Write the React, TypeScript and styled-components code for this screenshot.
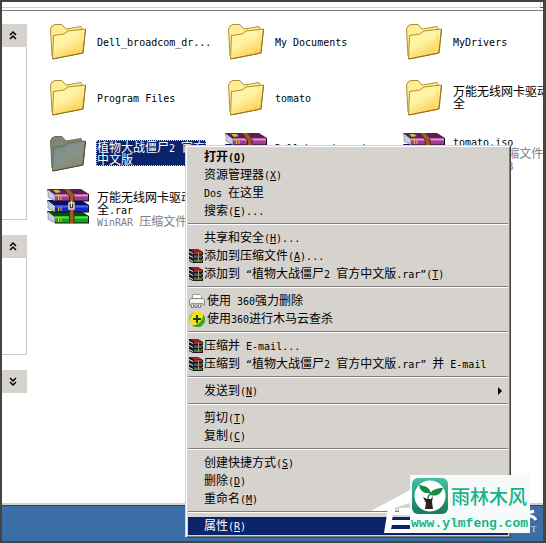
import React from "react";
import styled, { createGlobalStyle, css } from "styled-components";

const GlobalStyle = createGlobalStyle`
  * { box-sizing: border-box; }
  body {
    margin: 0;
    background: #444444;
    font-family: "Noto Sans CJK SC", sans-serif;
    font-size: 12px;
    line-height: 12px;
    color: #000;
  }
`;

const Frame = styled.main`
  position: relative;
  display: flex;
  flex-direction: column;
  min-height: 100vh;
  padding: 2px 3px 2px 2px;
  background: #444444;
  overflow: hidden;
`;

const TopEdge = styled.header`
  display: flex;
  justify-content: flex-end;
  height: 9px;
  background: #fff;
  border-bottom: 1px solid #808080;
  box-shadow: inset 0 -2px 0 #fff, inset 0 -3px 0 #d4d0c8;
`;

const Grip = styled.span`
  width: 3px;
  height: 6px;
  border-left: 1px solid #d4d0c8;
  border-bottom: 1px solid #404040;
`;

const Body = styled.div`
  display: flex;
  flex: 1;
  min-height: 0;
  background: #fff;
  border-bottom: 1px solid #404040;
  box-shadow: inset 0 -2px 0 #d4d0c8;
`;

const Desktop = styled.footer`
  height: 35px;
  background: #3a6ea5;
`;

const Sidebar = styled.aside`
  display: flex;
  flex-direction: column;
  gap: 15px;
  width: 25px;
  padding-top: 13px;
  flex-shrink: 0;
`;

const Panel = styled.section<{ $body?: number }>`
  ${(p) =>
    p.$body &&
    css`
      padding-bottom: ${p.$body}px;
      border-right: 1px solid #c8c8c8;
      border-bottom: 1px solid #c8c8c8;
    `}
`;

const PanelToggle = styled.button`
  display: flex;
  align-items: center;
  justify-content: flex-start;
  width: 25px;
  height: 23px;
  padding: 0 0 0 7px;
  border: 0;
  background: #d6d3ce;
`;

const Files = styled.div`
  display: grid;
  grid-template-columns: repeat(3, 178px);
  grid-auto-rows: 56px;
  align-content: start;
  flex: 1;
  min-width: 0;
  padding: 3px 0 0 19px;
  overflow: hidden;
`;

const File = styled.button`
  display: grid;
  grid-template-columns: 44px 116px;
  column-gap: 6px;
  align-items: center;
  justify-items: start;
  padding: 0;
  border: 0;
  background: none;
  font: inherit;
  color: inherit;
  text-align: left;
`;

const FileIcon = styled.span<{ $raised: boolean }>`
  display: flex;
  justify-self: center;
  padding-bottom: ${(p) => (p.$raised ? 8 : 0)}px;
`;

const FileText = styled.span<{ $selected?: boolean }>`
  display: flex;
  flex-direction: column;
  margin-bottom: 3px;
  padding: 1px;
  white-space: nowrap;
  ${(p) =>
    p.$selected &&
    css`
      background: #0a246a;
      color: #fff;
      outline: 1px dotted #f5db95;
      outline-offset: -1px;
    `}
`;

const Line = styled.span<{ $muted?: boolean }>`
  height: 12px;
  color: ${(p) => (p.$muted ? "#808080" : "inherit")};
`;

const Latin = styled.span`
  font-family: "DejaVu Sans Mono", monospace;
  font-size: 10px;
  white-space: pre;
`;

const Menu = styled.div`
  position: absolute;
  left: 185px;
  top: 145px;
  width: 326px;
  padding: 1px;
  background: #d6d3ce;
  border: 1px solid;
  border-color: #d6d3ce #404040 #404040 #d6d3ce;
  box-shadow: inset 1px 1px 0 #fff, inset -1px -1px 0 #808080;
`;

const MenuItems = styled.div`
  display: flex;
  flex-direction: column;
  padding: 1px;
`;

const Item = styled.button<{ $active?: boolean; $bold?: boolean }>`
  display: flex;
  align-items: center;
  height: 18px;
  padding: 0 6px 0 1px;
  border: 0;
  font: inherit;
  font-weight: ${(p) => (p.$bold ? 700 : 400)};
  background: ${(p) => (p.$active ? "#0a246a" : "transparent")};
  color: ${(p) => (p.$active ? "#fff" : "#000")};
  text-align: left;
`;

const IconSlot = styled.span<{ $wide?: boolean }>`
  display: flex;
  flex-shrink: 0;
  width: ${(p) => (p.$wide ? 18 : 15)}px;
`;

const Label = styled.span`
  flex: 1;
  white-space: pre;
`;

const Separator = styled.hr`
  width: 100%;
  height: 2px;
  margin: 3px 0 4px;
  border: 0;
  border-top: 1px solid #808080;
  border-bottom: 1px solid #fff;
`;

const Mark = styled.div`
  position: absolute;
  right: 3px;
  bottom: 2px;
  width: 173px;
  height: 66px;
  pointer-events: none;
`;

const Badge = styled.div`
  position: absolute;
  left: 40px;
  top: 0;
  width: 120px;
  height: 58px;
  display: flex;
  flex-direction: column;
  justify-content: space-between;
  padding: 3px 1px 2px;
  background: #f6faf8;
  color: #18b28a;
`;

const BadgeTop = styled.div`
  display: flex;
  align-items: center;
  gap: 3px;
  height: 36px;
  padding-left: 1px;
  font-size: 19px;
  font-weight: 500;
  line-height: 36px;
  white-space: nowrap;
`;

const Site = styled.div`
  font: bold 13px/15px "Liberation Mono", monospace;
`;

function Mixed({ text }: { text: string }) {
  return (
    <>
      {text.split(/([\x20-\x7e“”]+)/).map((run, i) =>
        i % 2 ? (
          <Latin key={i}>
            {run.split(/(\([A-Z]\))/).map((s, j) =>
              j % 2 ? (
                <React.Fragment key={j}>
                  (<u>{s[1]}</u>)
                </React.Fragment>
              ) : (
                s
              )
            )}
          </Latin>
        ) : (
          run
        )
      )}
    </>
  );
}

function FolderIcon({ selected }: { selected?: boolean }) {
  const id = selected ? "folderDim" : "folderLit";
  const edge = selected ? "#6c6a4c" : "#b08f2c";
  return (
    <svg width="38" height="38" viewBox="0 0 38 38" aria-hidden="true">
      <defs>
        <linearGradient id={id} x1="0" y1="0" x2=".6" y2="1">
          <stop offset="0" stopColor={selected ? "#74848a" : "#fff6a8"} />
          <stop offset=".5" stopColor={selected ? "#84948e" : "#fff3a4"} />
          <stop offset="1" stopColor={selected ? "#8a8a68" : "#fcca4c"} />
        </linearGradient>
      </defs>
      <path
        d="M3 33 1.500 6 3 3l3-1.500h7L16 5l1.500 1L32 3.500l1 2V30Z"
        fill={selected ? "#7e8878" : "#ffec96"}
        stroke={edge}
      />
      <path
        d="M3.500 36 4.500 12.500 15 11l4-3 17.500-2-2.500 24Z"
        fill={`url(#${id})`}
        stroke={edge}
        strokeLinejoin="round"
      />
      <path d="M32 7.500v21" stroke={selected ? "#8e967e" : "#ffdf74"} />
      <path d="M4 36 34 30l2.500-24" fill="none" stroke={selected ? "#4e4c34" : "#8f7422"} />
    </svg>
  );
}

const books = [
  { y: 0, dark: "#5c2050", main: "#a03c90", light: "#e090d0" },
  { y: 11, dark: "#081064", main: "#1428c8", light: "#4864f0" },
  { y: 22, dark: "#064c08", main: "#10a418", light: "#4ce050" },
];

function ArchiveIcon() {
  return (
    <svg width="42" height="35" viewBox="0 0 42 35" aria-hidden="true">
      {[...books].reverse().map((b) => (
        <g key={b.y} transform={`translate(0 ${b.y})`}>
          <path d="M0 0 8 6v6L1 8Q2 4 0 0Z" fill="#e4e8f4" stroke="#55566c" strokeWidth=".6" />
          <path d="m2 3 6 5M2 5l6 5M2 7l6 4" stroke="#9096ac" strokeWidth=".6" />
          <path d="M0 0h34l8 5v1H8Z" fill={b.dark} />
          <path d="M8 5h34v7H8Z" fill={b.main} />
          <path d="M8 6.500h34" stroke={b.light} strokeWidth="2" />
          <path d="M8 12h34M41.500 5v7" stroke="#101018" />
          <path d="M11.500 7v4M14 7v4" stroke="#e4c33c" />
        </g>
      ))}
      <path d="M17 0h5l5 6v28h-5V7Z" fill="#9b5a22" />
      <path d="M22.500 7v27M27 6v28M17 0l5 7" stroke="#4d2509" fill="none" />
      <path d="m6 1 5 0 3 2-5 1Z" fill="#b9cf35" />
      <path d="M22 14h5v6h-5Z" fill="#3a3a3a" stroke="#d8d8d8" strokeWidth="1.500" />
      <path d="M24.500 12v6" stroke="#eee" />
    </svg>
  );
}

function MiniArchive() {
  const rows = [
    { y: 0, color: "#b02838" },
    { y: 4, color: "#2468a0" },
    { y: 8, color: "#1c9048" },
  ];
  return (
    <svg width="14" height="14" viewBox="0 0 14 14" aria-hidden="true">
      {[...rows].reverse().map((r) => (
        <g key={r.y} transform={`translate(0 ${r.y})`}>
          <path d="M0 0h9l5 3v3H4L0 4Z" fill="#24161c" />
          <path d="M1.500 .5H9l3 2H5Z" fill={r.color} />
          <path d="M5 4h8" stroke={r.color} strokeWidth="2" />
          <path d="m0 2.500 4 2" stroke="#f0f0f0" />
        </g>
      ))}
      <path d="M9.500 3v10" stroke="#c09050" />
    </svg>
  );
}

function ShredderIcon() {
  return (
    <svg width="16" height="16" viewBox="0 0 16 16" aria-hidden="true">
      <path d="M3.500 6V1.500h8l1 1V6" fill="#fff" stroke="#999" />
      <path d="M.5 7 2.500 5.500h11l2 1.500v5H.5Z" fill="#ececec" stroke="#888" />
      <path d="M2 8h12" stroke="#fff" />
      <path d="M2 10.500h12" stroke="#999" />
      <path d="M2.500 12v2.500h2V12M6 12v2.500h2V12M9.500 12v2.500h2V12" fill="#fff" stroke="#777" />
    </svg>
  );
}

function ShieldIcon() {
  return (
    <svg width="16" height="16" viewBox="0 0 16 16" aria-hidden="true">
      <circle cx="8" cy="8" r="7.800" fill="#f7e11c" />
      <path d="M14.500 3.500A7.800 7.800 0 0 1 3 14c6 1 10.500-4 11.500-10.500Z" fill="#3aa52c" />
      <path d="M5 1a7.800 7.800 0 0 0-4 10C1 7 2 4 5 1Z" fill="#6cba2c" />
      <path d="M8 4v8M4 8h8" stroke="#164a12" strokeWidth="2" />
    </svg>
  );
}

function Chevrons({ down }: { down?: boolean }) {
  return (
    <svg width="8" height="10" viewBox="0 0 8 10" aria-hidden="true">
      <path
        d={down ? "M1 1l3 3 3-3M1 5l3 3 3-3" : "M1 4l3-3 3 3M1 8l3-3 3 3"}
        fill="none"
        stroke="#000"
        strokeWidth="1.500"
      />
    </svg>
  );
}

function SproutLogo() {
  return (
    <svg width="36" height="36" viewBox="0 0 36 36" aria-hidden="true">
      <defs>
        <linearGradient id="tile" x1="0" y1="0" x2="0" y2="1">
          <stop offset="0" stopColor="#42c0a0" />
          <stop offset="1" stopColor="#157a60" />
        </linearGradient>
      </defs>
      <rect width="36" height="36" rx="6" fill="url(#tile)" />
      <circle cx="18" cy="18" r="15.500" fill="#fff" />
      <path d="M19 15C17 8 12 8 7 7c1 6 5 9 12 8Z" fill="#168a45" />
      <path d="M18 17c1-5 6-7 13-7-2 6-6 9-13 7Z" fill="#168a45" />
      <path d="M16 21c0-3 1-5 4-6" fill="none" stroke="#168a45" strokeWidth="1.500" />
      <path d="m11 19 4 2 4 0 2-3-1 6 1 7h-8l1-6Z" fill="#2a2020" />
    </svg>
  );
}

type FileEntry = { lines: string[]; muted?: string[]; kind: "folder" | "archive"; selected?: boolean };

const files: FileEntry[] = [
  { kind: "folder", lines: ["Dell_broadcom_dr..."] },
  { kind: "folder", lines: ["My Documents"] },
  { kind: "folder", lines: ["MyDrivers"] },
  { kind: "folder", lines: ["Program Files"] },
  { kind: "folder", lines: ["tomato"] },
  { kind: "folder", lines: ["万能无线网卡驱动大", "全"] },
  { kind: "folder", lines: ["植物大战僵尸2 官方", "中文版"], selected: true },
  { kind: "archive", lines: ["Dell_broadcom_d..."], muted: ["WinRAR 压缩文件"] },
  { kind: "archive", lines: ["tomato.iso"], muted: ["WinRAR 压缩文件", "362,114 KB"] },
  { kind: "archive", lines: ["万能无线网卡驱动大", "全.rar"], muted: ["WinRAR 压缩文件"] },
];

type Entry = { text: string; icon?: React.ReactNode; wide?: boolean; bold?: boolean; sub?: boolean; active?: boolean };

const groups: Entry[][] = [
  [{ text: "打开(O)", bold: true }, { text: "资源管理器(X)" }, { text: "Dos 在这里" }, { text: "搜索(E)..." }],
  [
    { text: "共享和安全(H)..." },
    { text: "添加到压缩文件(A)...", icon: <MiniArchive /> },
    { text: "添加到 “植物大战僵尸2 官方中文版.rar”(T)", icon: <MiniArchive /> },
  ],
  [
    { text: "使用 360强力删除", icon: <ShredderIcon />, wide: true },
    { text: "使用360进行木马云查杀", icon: <ShieldIcon />, wide: true },
  ],
  [
    { text: "压缩并 E-mail...", icon: <MiniArchive /> },
    { text: "压缩到 “植物大战僵尸2 官方中文版.rar” 并 E-mail", icon: <MiniArchive /> },
  ],
  [{ text: "发送到(N)", sub: true }],
  [{ text: "剪切(T)" }, { text: "复制(C)" }],
  [{ text: "创建快捷方式(S)" }, { text: "删除(D)" }, { text: "重命名(M)" }],
  [{ text: "属性(R)", active: true }],
];

export default function App() {
  return (
    <Frame>
      <GlobalStyle />
      <TopEdge>
        <Grip />
      </TopEdge>
      <Body>
        <Sidebar>
          <Panel $body={172}>
            <PanelToggle aria-label="Collapse tasks"><Chevrons /></PanelToggle>
          </Panel>
          <Panel $body={96}>
            <PanelToggle aria-label="Collapse places"><Chevrons /></PanelToggle>
          </Panel>
          <Panel>
            <PanelToggle aria-label="Expand details"><Chevrons down /></PanelToggle>
          </Panel>
        </Sidebar>
        <Files>
          {files.map((f, i) => (
            <File key={i}>
              <FileIcon $raised={f.kind === "archive"}>
                {f.kind === "folder" ? <FolderIcon selected={f.selected} /> : <ArchiveIcon />}
              </FileIcon>
              <FileText $selected={f.selected}>
                {f.lines.map((l) => (
                  <Line key={l}><Mixed text={l} /></Line>
                ))}
                {f.muted?.map((l) => (
                  <Line key={l} $muted><Mixed text={l} /></Line>
                ))}
              </FileText>
            </File>
          ))}
        </Files>
      </Body>
      <Desktop />
      <Menu role="menu">
        <MenuItems>
          {groups.map((group, g) => (
            <React.Fragment key={g}>
              {g > 0 && <Separator />}
              {group.map((e) => (
                <Item key={e.text} role="menuitem" $active={e.active} $bold={e.bold}>
                  <IconSlot $wide={e.wide}>{e.icon}</IconSlot>
                  <Label><Mixed text={e.text} /></Label>
                  {e.sub && (
                    <svg width="4" height="8" viewBox="0 0 4 8" aria-hidden="true">
                      <path d="M0 0l4 4-4 4Z" />
                    </svg>
                  )}
                </Item>
              ))}
            </React.Fragment>
          ))}
        </MenuItems>
      </Menu>
      <Mark>
        <svg width="173" height="66" viewBox="0 0 173 66" aria-hidden="true">
          <path d="M1 36 40 15v13L15 36Z" fill="#fff" />
          <path d="M18 33h7v4h4v-4h12v7H23l-1 5h20v5H22l-1 4h20v4H14Z" fill="#fff" />
          <path d="m158 38 6-2M160 41c3 0 4 1 6 4" fill="none" stroke="#fff" strokeWidth="3" />
          <text x="161" y="57" fill="#dce6f0" fontFamily="Liberation Serif" fontSize="9">T</text>
        </svg>
        <Badge>
          <BadgeTop>
            <SproutLogo />
            雨林木风
          </BadgeTop>
          <Site>www.ylmfeng.com</Site>
        </Badge>
      </Mark>
    </Frame>
  );
}
